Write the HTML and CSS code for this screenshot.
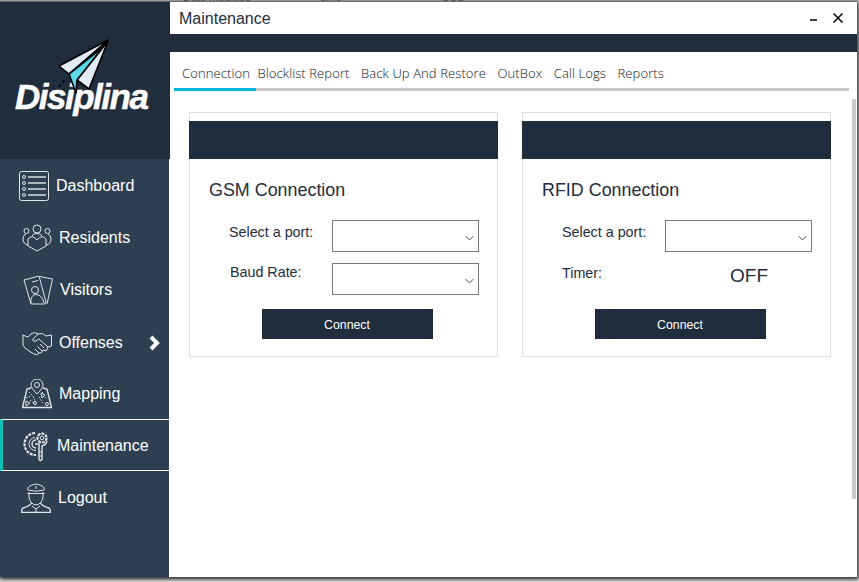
FILE: index.html
```html
<!DOCTYPE html>
<html lang="en">
<head>
<meta charset="utf-8">
<title>Disiplina - Maintenance</title>
<link rel="stylesheet" href="styles.css">
</head>
<body>
<div class="backdrop"><span class="bd-a">Date modified</span><span class="bd-b">time</span><span class="bd-c">SOB</span></div>
<div class="window">
  <aside class="sidebar">
    <div class="logo">
      <span class="logo-text">Disiplina</span>
      <svg class="plane" width="150" height="100" viewBox="0 0 150 100">
        <polygon class="pl-wing" points="108,40 59,66 69,74"/>
        <polygon class="pl-wing" points="108,41 89,89 77,80"/>
        <polygon class="pl-cyan" points="69,74 103,47 77,80 76,93"/>
        <path class="pl-dash" d="M59 87 L66 78"/>
      </svg>
    </div>
    <nav class="nav">
      <a class="nav-item item-dash">
        <svg class="ico" viewBox="0 0 30 30"><rect x="0.5" y="0.5" width="29" height="29" rx="2"/><circle cx="5" cy="6" r="1.5"/><circle cx="5" cy="12" r="1.5"/><circle cx="5" cy="18" r="1.5"/><circle cx="5" cy="24" r="1.5"/><path class="thick" d="M9 6H27M9 12H27M9 18H27M9 24H27"/></svg>
        <span>Dashboard</span>
      </a>
      <a class="nav-item item-res">
        <svg class="ico" viewBox="0 0 30 30"><circle cx="15" cy="6" r="4"/><circle cx="4.5" cy="8" r="2.5"/><circle cx="25.5" cy="8" r="2.5"/><path d="M6 16V23L15 28L24 23V16Q20 11 15 17Q10 11 6 16Z"/><path d="M6 22Q1 21 1 16Q1 12 4 11M24 22Q29 21 29 16Q29 12 26 11M10 13Q11 10.500 15 10.500Q19 10.500 20 13"/></svg>
        <span>Residents</span>
      </a>
      <a class="nav-item item-vis">
        <svg class="ico" viewBox="0 0 30 30"><path d="M1 5L16 1L23 27L22 29H8Z"/><path d="M16.500 1.500L29.500 4L24 29"/><path d="M9 7L15 5.500"/><circle cx="12" cy="15" r="3.500"/><path d="M8 28Q7 20 13 19.500Q19 19.500 21 28"/></svg>
        <span>Visitors</span>
      </a>
      <a class="nav-item item-off">
        <svg class="ico" viewBox="0 0 30 30"><path d="M0.500 7L6 9L8 7Q12 3 16 6L11 11Q10 14 14 13L17 11L26 19"/><path d="M29.500 7V18L26 19L24 23L21 22Q20 26 17 25Q15 28 12 26L7 23Q2 20 1 17V7"/><path d="M16 6Q21 4 24 8L29.500 7M22 20L18 16M20 23L15.500 18.500M17 25L13 21"/></svg>
        <span>Offenses</span>
        <svg class="arrow" width="12" height="16" viewBox="0 0 12 16"><path d="M3 2L9 8L3 14"/></svg>
      </a>
      <a class="nav-item item-map">
        <svg class="ico" viewBox="0 0 30 30"><path d="M15 15Q9 9 9 6A6 6 0 0 1 21 6Q21 9 15 15Z"/><circle cx="15" cy="6" r="2.500"/><path class="heavy" d="M9 9L5 10L0.500 28.500H29.500L25 10L21 9"/><path class="dots" d="M7 13L11 17L13 22M20 13L24 19M8 21L14 26M17 18L21 24M4 19L9 17"/><path d="M4 22L8 24L4 27ZM19 14L23 16L20 19Z"/><circle cx="13" cy="24" r="1.500"/><circle cx="25" cy="25" r="1.500"/></svg>
        <span>Mapping</span>
      </a>
      <a class="nav-item item-main is-active">
        <svg class="ico ico-narrow" viewBox="0 0 26 31"><path class="thin-dash" d="M13 2A11 11 0 1 0 14 24"/><path d="M13 6.500A6.500 6.500 0 1 0 14 19.500"/><path class="heavy" d="M14 9A4 4 0 1 0 14 17"/><circle class="thin-dash" cx="20" cy="7" r="4.500"/><circle cx="20" cy="7" r="1.800"/><path class="heavy" d="M13 13H17V28.500Q18 30.500 20 28.500L20 15Q24 14 25 10"/><path d="M17 21H20M17 25H20"/></svg>
        <span>Maintenance</span>
      </a>
      <a class="nav-item item-out">
        <svg class="ico" viewBox="0 0 30 30"><path d="M7 7Q5 3 15 1Q25 3 23 7Q15 9.500 7 7Z"/><path d="M8 9V14Q9 21 15 22Q21 21 22 14V9"/><path d="M6.500 10.500H23.500M15 3V6"/><path class="heavy" d="M10.500 20Q9 23 2 25Q0.500 26 0.500 29.500H29.500Q29.500 26 28 25Q21 23 19.500 20"/><path d="M11 23L15 26L19 23M15 26V29"/></svg>
        <span>Logout</span>
      </a>
    </nav>
  </aside>

  <main class="main">
    <header class="titlebar">
      <h1 class="title">Maintenance</h1>
      <div class="win-btns">
        <svg width="10" height="10" viewBox="0 0 10 10"><path d="M1 7H8"/></svg>
        <svg width="10" height="10" viewBox="0 0 10 10"><path d="M0.500 0.500L9.500 9.500M9.500 0.500L0.500 9.500"/></svg>
      </div>
    </header>
    <div class="band"></div>
    <div class="tabs">
      <span class="tab is-active">Connection</span>
      <span class="tab">Blocklist Report</span>
      <span class="tab">Back Up And Restore</span>
      <span class="tab">OutBox</span>
      <span class="tab">Call Logs</span>
      <span class="tab">Reports</span>
    </div>
    <div class="content">
      <div class="cards">
        <section class="card">
          <div class="card-head"></div>
          <h2 class="card-title">GSM Connection</h2>
          <div class="row">
            <span class="label">Select a port:</span>
            <div class="select"><svg width="9" height="6" viewBox="0 0 9 6"><path d="M0.500 1L4.500 5L8.500 1"/></svg></div>
          </div>
          <div class="row">
            <span class="label label-baud">Baud Rate:</span>
            <div class="select"><svg width="9" height="6" viewBox="0 0 9 6"><path d="M0.500 1L4.500 5L8.500 1"/></svg></div>
          </div>
          <button class="connect" type="button">Connect</button>
        </section>
        <section class="card">
          <div class="card-head"></div>
          <h2 class="card-title">RFID Connection</h2>
          <div class="row">
            <span class="label">Select a port:</span>
            <div class="select"><svg width="9" height="6" viewBox="0 0 9 6"><path d="M0.500 1L4.500 5L8.500 1"/></svg></div>
          </div>
          <div class="row">
            <span class="label label-timer">Timer:</span>
            <span class="off">OFF</span>
          </div>
          <button class="connect" type="button">Connect</button>
        </section>
      </div>
      <div class="scroll-thumb"></div>
    </div>
  </main>
</div>
</body>
</html>
```
FILE: styles.css
```css
* { box-sizing: border-box; }
html, body { margin: 0; padding: 0; }
body {
  width: 859px;
  height: 582px;
  overflow: hidden;
  background: #dcdcdc;
  font-family: "Liberation Sans", Arial, sans-serif;
}
.backdrop {
  height: 2px;
  overflow: hidden;
  display: flex;
  font-size: 11px;
  line-height: 2px;
  color: #555;
  background: #c8c8c8;
}
.backdrop span { margin-top: -4px; }
.bd-a { margin-left: 183px; }
.bd-b { margin-left: 70px; }
.bd-c { margin-left: 100px; }
.window {
  position: relative;
  width: 857px;
  height: 575px;
  display: flex;
  background: #fff;
  box-shadow: 0 0 3px 1px #444, 1px 2px 4px #333;
}
.sidebar {
  width: 169px;
  display: flex;
  flex-direction: column;
  background: #2e3f51;
}
.logo {
  position: relative;
  width: 170px;
  height: 157px;
  background: #1f2d3d;
  padding: 73px 0 0 15px;
}
.logo-text {
  display: block;
  font-size: 35px;
  line-height: 44px;
  font-weight: 700;
  font-style: italic;
  letter-spacing: -1.5px;
  color: #fff;
  -webkit-text-stroke: 0.5px #fff;
}
.plane {
  position: absolute;
  left: 0;
  top: -2px;
}
.plane polygon { stroke: #000; stroke-width: 1.6; stroke-linejoin: round; }
.pl-wing { fill: #e1ebf6; }
.pl-cyan { fill: #5bd5e8; }
.pl-dash { stroke: #000; stroke-width: 1.500; stroke-dasharray: 3 2.500; fill: none; }
.nav { display: flex; flex-direction: column; }
.nav-item {
  height: 52px;
  padding-top: 2px;
  display: flex;
  align-items: center;
  font-size: 16px;
  color: #fff;
}
.item-dash { padding-left: 19px; gap: 7px; }
.item-res { padding-left: 22px; gap: 7px; }
.item-vis { padding-left: 23px; gap: 7px; }
.item-off { padding-left: 22px; padding-top: 4px; gap: 7px; }
.item-map { padding-left: 22px; gap: 7px; }
.item-main { padding-left: 19px; gap: 9px; }
.item-out { padding-left: 21px; gap: 7px; }
.is-active.nav-item {
  border-top: 1px solid #fff;
  border-bottom: 1px solid #fff;
  border-left: 3px solid #10bfb8;
}
.ico {
  width: 30px;
  height: 30px;
  flex: none;
  fill: none;
  stroke: #e2e6ea;
  stroke-width: 1;
}
.ico .thick { stroke: #aeb6bd; stroke-width: 2; }
.ico .heavy { stroke-width: 1.400; }
.ico .dots { stroke-dasharray: 1.500 1.500; }
.ico .thin-dash { stroke-width: 2.200; stroke-dasharray: 3 1; }
.ico-narrow { width: 26px; height: 31px; }
.arrow {
  margin-left: auto;
  margin-right: 9px;
  fill: none;
  stroke: #fff;
  stroke-width: 4;
}
.main {
  flex: 1;
  display: flex;
  flex-direction: column;
  min-width: 0;
}
.titlebar {
  height: 32px;
  padding: 2px 14px 0 10px;
  display: flex;
  align-items: center;
  justify-content: space-between;
}
.title {
  margin: 0;
  font-size: 16px;
  font-weight: 400;
  color: #1f2d3d;
}
.win-btns {
  display: flex;
  align-items: center;
  gap: 14px;
  margin-top: -2px;
}
.win-btns svg { fill: none; stroke: #000; stroke-width: 1.500; display: block; }
.band { height: 18px; background: #1f2d3d; }
.tabs {
  margin: 0 8px 0 5px;
  height: 39px;
  padding: 12px 0 0 8px;
  display: flex;
  gap: 11.500px;
  border-bottom: 3px solid #c8c8c8;
  position: relative;
  font-family: "Open Sans", sans-serif;
  font-size: 13px;
  font-weight: 300;
  letter-spacing: 0.1px;
  line-height: 19px;
  color: #0c1622;
}
.tabs .is-active { margin-right: -4px; }
.tabs .is-active::after {
  content: "";
  position: absolute;
  left: 0;
  bottom: -3px;
  width: 82px;
  height: 3px;
  background: #00b4e0;
}
.content {
  position: relative;
  flex: 1;
  padding: 21px 0 0 20px;
}
.cards { display: flex; gap: 24px; }
.card {
  width: 309px;
  height: 245px;
  padding-top: 8px;
  border: 1px solid #ddd;
  display: flex;
  flex-direction: column;
}
.card-head {
  margin: 0 -1px;
  height: 38px;
  background: #1f2d3d;
}
.card-title {
  margin: 22px 0 0 19px;
  font-size: 17.900px;
  line-height: 18px;
  font-weight: 400;
  color: #1f2d3d;
}
.row {
  display: flex;
  align-items: flex-start;
  height: 32px;
  margin: 21px 0 0 39px;
}
.row + .row { margin-top: 11px; }
.label {
  width: 103px;
  font-size: 14.300px;
  line-height: 24px;
  color: #1f2d3d;
}
.label-baud { padding-left: 1px; line-height: 19px; }
.label-timer { width: 168px; line-height: 21px; }
.off {
  font-size: 19px;
  line-height: 22px;
  margin-top: 2px;
  color: #1f2d3d;
}
.select {
  width: 147px;
  height: 32px;
  border: 1px solid #7a7a7a;
  display: flex;
  align-items: center;
  justify-content: flex-end;
  padding: 4px 4px 0 0;
}
.select svg { fill: none; stroke: #555; stroke-width: 1; }
.connect {
  align-self: flex-start;
  margin: 14px 0 0 72px;
  width: 171px;
  height: 30px;
  padding: 2px 1px 0 0;
  border: 0;
  background: #1f2d3d;
  color: #fff;
  font-family: "Liberation Sans", Arial, sans-serif;
  font-size: 12.300px;
}
.scroll-thumb {
  position: absolute;
  right: 1px;
  top: 8px;
  width: 4px;
  height: 400px;
  background: #c9c9c6;
}
```
